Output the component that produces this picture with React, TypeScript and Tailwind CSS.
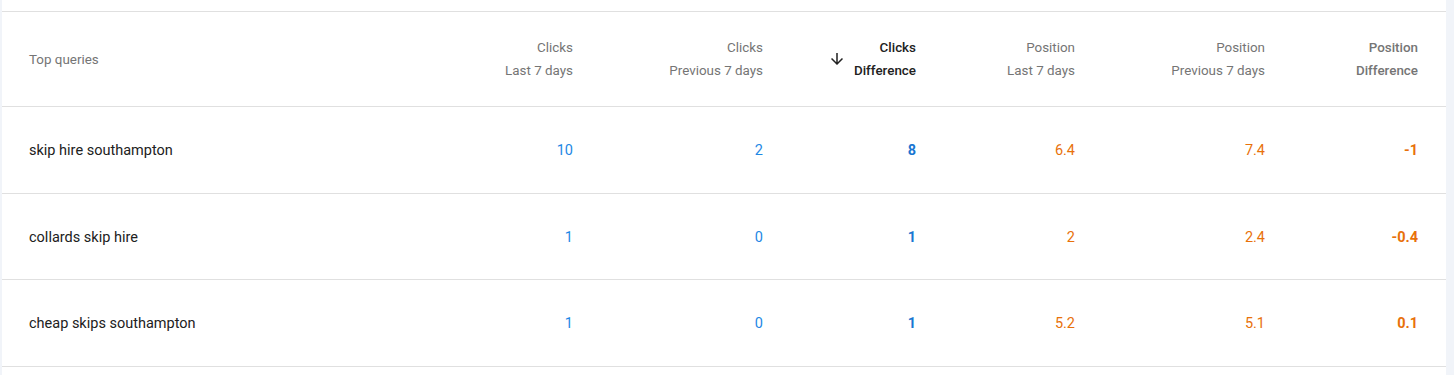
const rows = [
    { query: "skip hire southampton", c7: "10", cp: "2", cd: "8", p7: "6.4", pp: "7.4", pd: "-1" },
    { query: "collards skip hire", c7: "1", cp: "0", cd: "1", p7: "2", pp: "2.4", pd: "-0.4" },
    { query: "cheap skips southampton", c7: "1", cp: "0", cd: "1", p7: "5.2", pp: "5.1", pd: "0.1" },
];

const cols = "grid grid-cols-[1fr_140px_190px_153px_159px_190px_153px] px-[27px] pr-[28px]";

const App = () => {
    return (
        <div className="min-h-screen bg-[#f1f4f9] px-[2px] pr-[8px] font-['Roboto',sans-serif]">
            <div className="bg-white pt-[11px] min-h-screen">
                <div className={`${cols} h-[96px] items-center border-t border-b border-[#e0e0e0] text-[13.4px] leading-[23px] text-[#757575]`}>
                    <div>Top queries</div>
                    <div className="text-right">
                        <div>Clicks</div>
                        <div>Last 7 days</div>
                    </div>
                    <div className="text-right">
                        <div>Clicks</div>
                        <div>Previous 7 days</div>
                    </div>
                    <div className="flex items-center justify-end gap-[8px] text-[#212121] font-medium">
                        <svg width="18" height="18" viewBox="0 0 24 24" fill="#212121">
                            <path d="M20 12l-1.41-1.41L13 16.17V4h-2v12.17l-5.58-5.59L4 12l8 8 8-8z" />
                        </svg>
                        <div className="text-right">
                            <div>Clicks</div>
                            <div>Difference</div>
                        </div>
                    </div>
                    <div className="text-right">
                        <div>Position</div>
                        <div>Last 7 days</div>
                    </div>
                    <div className="text-right">
                        <div>Position</div>
                        <div>Previous 7 days</div>
                    </div>
                    <div className="text-right font-medium">
                        <div>Position</div>
                        <div>Difference</div>
                    </div>
                </div>
                {rows.map((r) => (
                    <div key={r.query} className={`${cols} h-[86.7px] pt-[2px] items-center border-b border-[#e0e0e0] text-[14.5px]`}>
                        <div className="text-[#212121]">{r.query}</div>
                        <div className="text-right text-[#1e88e5]">{r.c7}</div>
                        <div className="text-right text-[#1e88e5]">{r.cp}</div>
                        <div className="text-right text-[#1976d2] font-bold">{r.cd}</div>
                        <div className="text-right text-[#e8710a]">{r.p7}</div>
                        <div className="text-right text-[#e8710a]">{r.pp}</div>
                        <div className="text-right text-[#e8710a] font-bold">{r.pd}</div>
                    </div>
                ))}
            </div>
        </div>
    );
};

export default App;
